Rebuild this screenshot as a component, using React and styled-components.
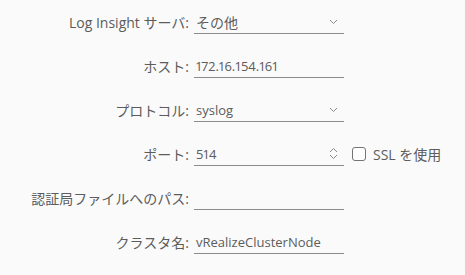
import React from "react";
import styled, { createGlobalStyle } from "styled-components";

const GlobalStyle = createGlobalStyle`
  html, body {
    margin: 0;
    padding: 0;
    background: #fafafa;
  }
  body {
    font-family: "Open Sans", "Noto Sans CJK JP", sans-serif;
    font-variant-numeric: proportional-nums;
    color: #5c5c5c;
  }
`;

const fields = [
  { label: "Log Insight サーバ:", value: "その他", kind: "select", cjk: true },
  { label: "ホスト:", value: "172.16.154.161", kind: "text" },
  { label: "プロトコル:", value: "syslog", kind: "select" },
  { label: "ポート:", value: "514", kind: "number" },
  { label: "認証局ファイルへのパス:", value: "", kind: "text" },
  { label: "クラスタ名:", value: "vRealizeClusterNode", kind: "text" },
];

function Chevron() {
  return (
    <svg width="9" height="6" viewBox="0 0 9 6">
      <path d="M1 1l3.5 3.5L8 1" fill="none" stroke="#8a8a8a" strokeWidth="1" />
    </svg>
  );
}

function Spinner() {
  return (
    <svg width="9" height="13" viewBox="0 0 9 13">
      <path d="M1 5l3.5-3.5L8 5" fill="none" stroke="#8a8a8a" strokeWidth="1" />
      <path d="M1 8l3.5 3.5L8 8" fill="none" stroke="#8a8a8a" strokeWidth="1" />
    </svg>
  );
}

function App() {
  return (
    <>
      <GlobalStyle />
      <Form>
        {fields.map((f) => (
          <Row key={f.label}>
            <Label>{f.label}</Label>
            <Field>
              <Value $cjk={f.cjk}>{f.value}</Value>
              {f.kind === "select" && (
                <Icon>
                  <Chevron />
                </Icon>
              )}
              {f.kind === "number" && (
                <Icon>
                  <Spinner />
                </Icon>
              )}
            </Field>
            {f.kind === "number" && (
              <CheckLabel>
                <Box />
                SSL を使用
              </CheckLabel>
            )}
          </Row>
        ))}
      </Form>
    </>
  );
}

const Form = styled.div`
  display: flex;
  flex-direction: column;
  gap: 20px;
  padding-top: 10px;
`;

const Row = styled.div`
  display: grid;
  grid-template-columns: 189px 150px auto;
  column-gap: 5px;
  align-items: center;
  height: 24px;
`;

const Label = styled.span`
  text-align: right;
  font-size: 14px;
  white-space: nowrap;
`;

const Field = styled.div`
  display: flex;
  align-items: center;
  height: 23px;
  border-bottom: 1px solid #8c8c8c;
  padding: 0 5px 0 2px;
`;

const Value = styled.span`
  flex: 1;
  font-size: ${(p) => (p.$cjk ? "14px" : "13px")};
  white-space: nowrap;
`;

const Icon = styled.span`
  display: flex;
  align-items: center;
  margin-right: 1px;
`;

const CheckLabel = styled.label`
  display: flex;
  align-items: center;
  gap: 7px;
  margin-left: 3px;
  font-size: 14px;
  white-space: nowrap;
`;

const Box = styled.span`
  width: 12px;
  height: 12px;
  border: 1px solid #737373;
  border-radius: 3px;
  background: #fff;
`;

export default App;
